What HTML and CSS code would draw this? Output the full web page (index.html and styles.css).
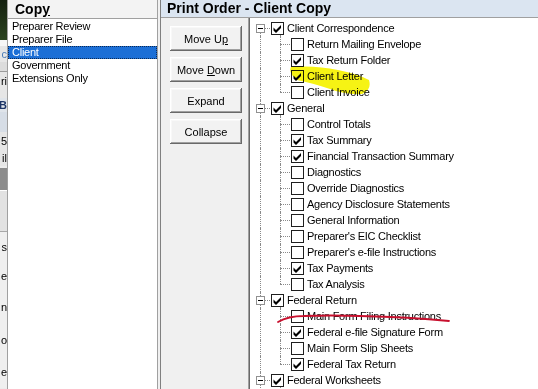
FILE: index.html
```html
<!DOCTYPE html>
<html lang="en">
<head>
    <meta charset="UTF-8">
    <meta name="viewport" content="width=device-width, initial-scale=1.0">
    <title>Print Order - Client Copy</title>
    <link rel="stylesheet" href="styles.css">
</head>
<body>
<div class="screen">
    <!-- window behind, only a sliver shows -->
    <div class="behind">
        <div class="bh bh-green"></div>
        <div class="bh bh-white"></div>
        <div class="bh bh-grey frag-blue">c</div>
        <div class="bh bh-line"></div>
        <div class="bh bh-grey bh-tall">ri</div>
        <div class="bh bh-gap"></div>
        <div class="bh bh-icon">B</div>
        <div class="bh bh-blue"></div>
        <div class="bh bh-grey bh-tall">5</div>
        <div class="bh bh-grey">il</div>
        <div class="bh bh-dark"></div>
        <div class="bh bh-pale"></div>
        <div class="bh bh-light h30">s</div>
        <div class="bh bh-light h28">e</div>
        <div class="bh bh-light h34">n</div>
        <div class="bh bh-light">o</div>
        <div class="bh bh-light">e</div>
    </div>

    <section class="copy-panel">
        <h2 class="panel-title">Cop<u>y</u></h2>
        <ul class="copy-list">
            <li>Preparer Review</li>
            <li>Preparer File</li>
            <li class="selected">Client</li>
            <li>Government</li>
            <li>Extensions Only</li>
        </ul>
    </section>

    <div class="splitter"></div>

    <section class="order-panel">
        <h2 class="order-title">Print Order - Client Copy</h2>
        <div class="order-body">
            <div class="order-buttons">
                <button>Move U<u>p</u></button>
                <button>Move <u>D</u>own</button>
                <button>Expand</button>
                <button>Collapse</button>
            </div>
            <div class="tree" id="tree"></div>
        </div>
    </section>

    <!-- marker annotations drawn over the screenshot -->
    <svg class="marks" width="538" height="389" viewBox="0 0 538 389">
        <path class="hilite" d="M291 67 Q315 65 338 70 Q358 74 369 80 Q372 90 362 94 Q345 95 330 89 Q312 83 297 80 Q288 73 291 67 Z"/>
        <path class="redline" d="M278 322 Q288 316 304 316 Q330 315 360 316 Q410 317 449 321"/>
    </svg>
</div>

<script>
    const groups = [
        { name: 'Client Correspondence', on: true, items: [
            ['Return Mailing Envelope', false],
            ['Tax Return Folder', true],
            ['Client Letter', true],
            ['Client Invoice', false]
        ]},
        { name: 'General', on: true, items: [
            ['Control Totals', false],
            ['Tax Summary', true],
            ['Financial Transaction Summary', true],
            ['Diagnostics', false],
            ['Override Diagnostics', false],
            ['Agency Disclosure Statements', false],
            ['General Information', false],
            ["Preparer's EIC Checklist", false],
            ["Preparer's e-file Instructions", false],
            ['Tax Payments', true],
            ['Tax Analysis', false]
        ]},
        { name: 'Federal Return', on: true, items: [
            ['Main Form Filing Instructions', false],
            ['Federal e-file Signature Form', true],
            ['Main Form Slip Sheets', false],
            ['Federal Tax Return', true]
        ]},
        { name: 'Federal Worksheets', on: true, items: [] }
    ];

    const tick = '<svg viewBox="0 0 11 11" width="11" height="11"><polygon points="1.5,4.5 4,7 9,2 9,5 4,10 1.5,7.5"/></svg>';

    function box(on) {
        return `<span class="box">${on ? tick : ''}</span>`;
    }

    const tree = document.getElementById('tree');
    let html = '';
    groups.forEach((g, gi) => {
        html += `
            <div class="node">
                <span class="lane rail ${gi === 0 ? 'first' : ''}"><span class="toggle"></span></span>
                <span class="lane-open">${box(g.on)}</span>
                <span class="label">${g.name}</span>
            </div>`;
        g.items.forEach((item, i) => {
            const last = i === g.items.length - 1;
            html += `
                <div class="node">
                    <span class="lane rail plain"></span>
                    <span class="lane branch ${last ? 'last' : ''}"></span>
                    ${box(item[1])}
                    <span class="label">${item[0]}</span>
                </div>`;
        });
    });
    tree.innerHTML = html;
</script>
</body>
</html>
```

FILE: styles.css
```css
* {
    box-sizing: border-box;
}
body {
    margin: 0;
    background-color: #f0f0f0;
    font-family: "Liberation Sans", Arial, sans-serif;
    font-size: 11px;
    color: #000;
}
.screen {
    position: relative;
    width: 538px;
    height: 389px;
    display: flex;
    overflow: hidden;
    background-color: #f0f0f0;
}

/* sliver of the window behind */
.behind {
    width: 7px;
    flex: none;
    display: flex;
    flex-direction: column;
    overflow: hidden;
    background-color: #ececec;
}
.bh {
    display: flex;
    justify-content: flex-end;
    align-items: center;
    white-space: nowrap;
    font-size: 11px;
    overflow: hidden;
    flex: none;
}
.bh-green {
    height: 40px;
    background: linear-gradient(#14200f, #2c4420);
}
.bh-white {
    height: 6px;
    background-color: #f7f7f7;
}
.bh-grey {
    height: 16px;
    background-color: #e6e6e6;
}
.bh-tall {
    height: 18px;
}
.frag-blue {
    color: #4a7bb5;
}
.bh-line {
    height: 10px;
    border-bottom: 1px solid #9a9a9a;
    background-color: #dcdcdc;
}
.bh-gap {
    height: 8px;
    background-color: #e6e6e6;
}
.bh-icon {
    height: 14px;
    background-color: #dfe4ea;
    color: #1d3566;
    font-weight: bold;
}
.bh-blue {
    height: 20px;
    background-color: #d6dde6;
}
.bh-dark {
    height: 22px;
    margin-top: 2px;
    background-color: #8c8c8c;
}
.bh-pale {
    height: 42px;
    border-top: 1px solid #fff;
    border-bottom: 1px solid #a8a8a8;
    background-color: #e2e2e2;
}
.bh-light {
    height: 32px;
    background-color: #efefef;
}
.h30 {
    height: 30px;
}
.h28 {
    height: 28px;
}
.h34 {
    height: 34px;
}

/* copy list */
.copy-panel {
    width: 151px;
    flex: none;
    display: flex;
    flex-direction: column;
    border-left: 1px solid #a0a0a0;
    border-right: 1px solid #a0a0a0;
    background-color: #fff;
}
.panel-title {
    margin: 0;
    height: 19px;
    padding-left: 7px;
    border-bottom: 1px solid #a0a0a0;
    background-color: #f3f3f3;
    font-size: 14px;
    line-height: 18px;
    font-weight: bold;
}
.copy-list {
    list-style: none;
    margin: 0;
    padding: 1px 0 0 0;
    letter-spacing: -0.25px;
}
.copy-list li {
    height: 13px;
    line-height: 13px;
    padding-left: 4px;
}
.copy-list li.selected {
    background-color: #1c6fd6;
    color: #fff;
    outline: 1px dotted #0b2a55;
    outline-offset: -1px;
}

.splitter {
    width: 3px;
    flex: none;
    border-right: 1px solid #808080;
}

/* print order */
.order-panel {
    flex: 1;
    display: flex;
    flex-direction: column;
}
.order-title {
    margin: 0;
    height: 18px;
    padding-left: 6px;
    border-bottom: 1px solid #a0a0a0;
    background-color: #dbe5f1;
    font-size: 14px;
    line-height: 17px;
    font-weight: bold;
}
.order-body {
    flex: 1;
    display: flex;
}
.order-buttons {
    width: 87px;
    flex: none;
    display: flex;
    flex-direction: column;
    gap: 6px;
    padding: 8px 0 0 9px;
}
.order-buttons button {
    width: 72px;
    height: 25px;
    padding: 0;
    border: none;
    background-color: #f2f2f2;
    box-shadow: inset -1px -1px #696969, inset 1px 1px #fff, inset -2px -2px #a0a0a0, inset 2px 2px #f8f8f8;
    font-family: "Liberation Sans", Arial, sans-serif;
    font-size: 11px;
    color: #000;
}

.tree {
    flex: 1;
    padding: 2px 0 0 1px;
    border-left: 1px solid #a0a0a0;
    box-shadow: inset 1px 0 #696969;
    background-color: #fff;
    letter-spacing: -0.25px;
}
.node {
    height: 16px;
    display: flex;
    align-items: flex-start;
    white-space: nowrap;
}
.lane {
    position: relative;
    width: 20px;
    height: 16px;
    flex: none;
}
.rail::before {
    content: "";
    position: absolute;
    left: 10px;
    top: 0;
    bottom: 0;
    border-left: 1px dotted #8a8a8a;
}
.rail.first::before {
    top: 8px;
}
.rail:not(.plain)::after {
    content: "";
    position: absolute;
    left: 14px;
    right: 0;
    top: 8px;
    border-top: 1px dotted #8a8a8a;
}
.toggle {
    position: absolute;
    z-index: 1;
    left: 6px;
    top: 4px;
    width: 9px;
    height: 9px;
    border: 1px solid #919191;
    background-color: #fff;
}
.toggle::after {
    content: "";
    position: absolute;
    left: 1px;
    top: 3px;
    width: 5px;
    height: 1px;
    background-color: #000;
}
.lane-open {
    position: relative;
    height: 16px;
    display: flex;
}
.lane-open::before {
    content: "";
    position: absolute;
    left: 10px;
    top: 8px;
    bottom: 0;
    border-left: 1px dotted #8a8a8a;
}
.branch::before {
    content: "";
    position: absolute;
    left: 10px;
    top: 0;
    bottom: 0;
    border-left: 1px dotted #8a8a8a;
}
.branch.last::before {
    bottom: 8px;
}
.branch::after {
    content: "";
    position: absolute;
    left: 10px;
    right: 0;
    top: 8px;
    border-top: 1px dotted #8a8a8a;
}
.box {
    position: relative;
    width: 13px;
    height: 13px;
    margin: 2px 0 0 1px;
    flex: none;
    border: 1px solid #1e1e1e;
    background-color: #fff;
}
.box svg {
    display: block;
    fill: #000;
}
.label {
    margin-left: 3px;
    line-height: 16px;
}

/* annotations */
.marks {
    position: absolute;
    left: 0;
    top: 0;
    pointer-events: none;
}
.hilite {
    fill: #f6f200;
    opacity: 0.92;
    mix-blend-mode: multiply;
}
.redline {
    fill: none;
    stroke: #c8102e;
    stroke-width: 1.8;
    stroke-linecap: round;
}
```
